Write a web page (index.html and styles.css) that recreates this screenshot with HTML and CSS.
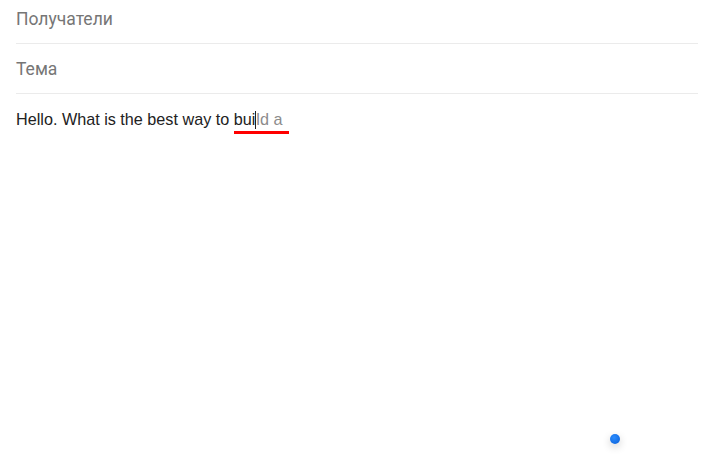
FILE: index.html
```html
<!DOCTYPE html>
<html>
<head>
<meta charset="utf-8">
<link rel="stylesheet" href="styles.css">
</head>
<body>
<div class="compose">
  <div class="row first">Получатели</div>
  <div class="row">Тема</div>
  <div class="body-text">Hello. What is the best way to <span class="suggest">bui<span class="caret"></span><span class="ghost">ld a</span></span></div>
</div>
<div class="dot"></div>
</body>
</html>
```
FILE: styles.css
```css
html, body {
  margin: 0;
  padding: 0;
  background: #fff;
  width: 710px;
  height: 474px;
  overflow: hidden;
  font-family: "Liberation Sans", Arial, sans-serif;
}
.compose {
  padding: 0 12px 0 16px;
}
.row {
  height: 49px;
  border-bottom: 1px solid #ebebeb;
  display: flex;
  align-items: center;
  font-family: Roboto, "Liberation Sans", sans-serif;
  font-size: 17.5px;
  color: #767676;
}
.row.first {
  height: 38px;
  padding-bottom: 5px;
}
.body-text {
  padding-top: 15px;
  font-size: 16.2px;
  line-height: 20px;
  color: #222;
}
.suggest {
  position: relative;
}
.suggest::after {
  content: "";
  position: absolute;
  left: 0;
  right: -7px;
  bottom: -6px;
  height: 3px;
  background: #f00;
}
.caret {
  display: inline-block;
  width: 1px;
  height: 18px;
  background: #222;
  vertical-align: -4px;
}
.ghost {
  color: #8c8c8c;
}
.dot {
  position: absolute;
  left: 610px;
  top: 434px;
  width: 10px;
  height: 10px;
  border-radius: 50%;
  background: radial-gradient(circle at 40% 35%, #2a8cff, #0a5fd6);
  box-shadow: 0 3px 8px rgba(0,0,0,0.2);
}
```
